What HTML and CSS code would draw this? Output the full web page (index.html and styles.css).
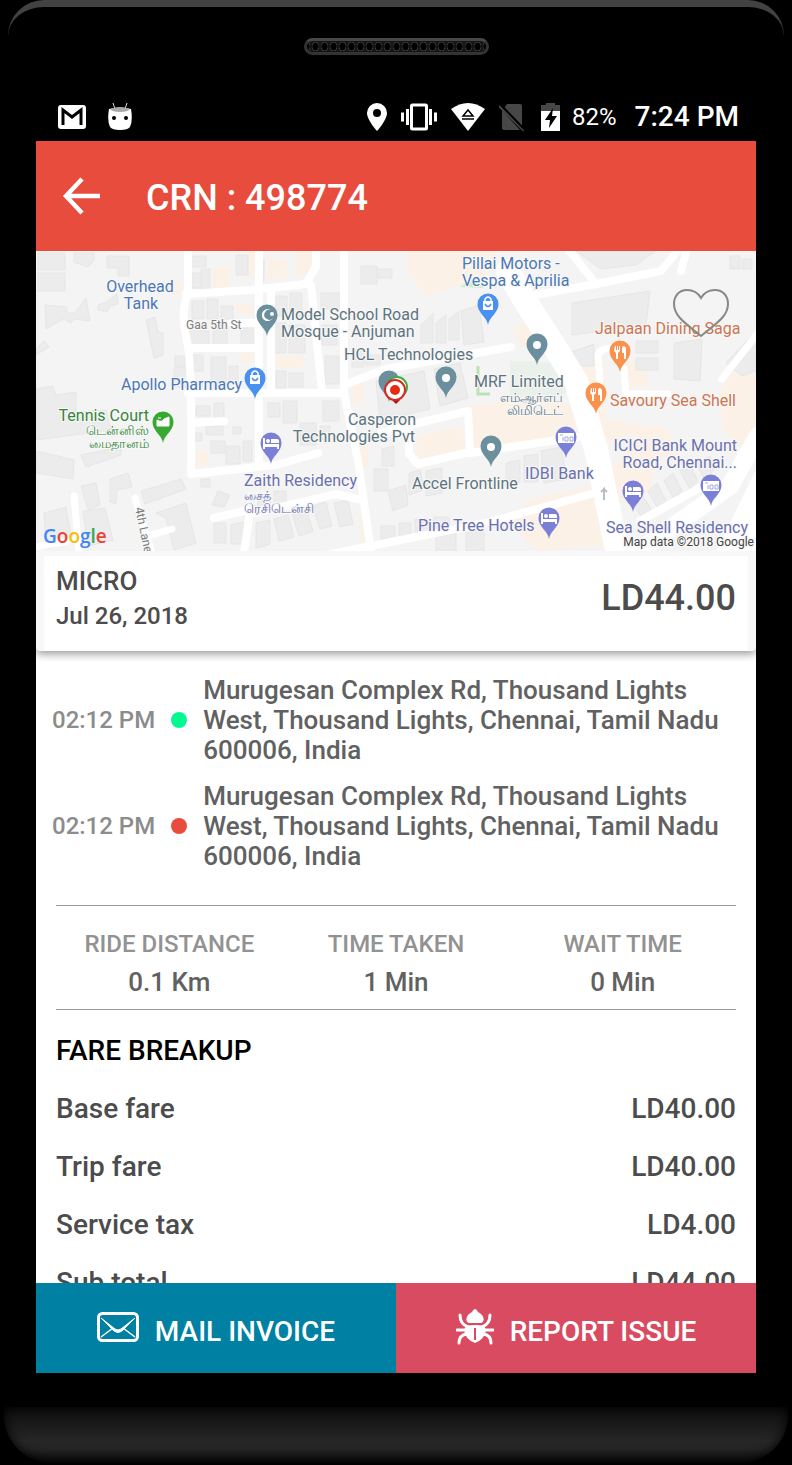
FILE: index.html
```
<!DOCTYPE html>
<html lang="en">
<head>
    <meta charset="UTF-8">
    <meta name="viewport" content="width=device-width, initial-scale=1.0">
    <title>CRN : 498774</title>
    <link rel="stylesheet" href="styles.css">
</head>
<body>
    <div class="phone">
        <div class="bezel-top">
            <div class="speaker"></div>
        </div>
        <div class="screen">
            <div class="status-bar">
                <div class="status-left">
                    <svg width="28" height="24" viewBox="0 0 28 24">
                        <rect width="28" height="24" rx="3" fill="#fff"/>
                        <path d="M5 20V5l9 7 9-7v15" fill="none" stroke="#000" stroke-width="3"/>
                    </svg>
                    <svg width="24" height="28" viewBox="0 0 24 28">
                        <path d="M5 0l2 6M19 0l-2 6" stroke="#ddd" stroke-width="1"/>
                        <path d="M1 6Q12 3 23 6Q25 17 22 24Q20 27 12 27T2 24Q-1 17 1 6z" fill="#fff"/>
                        <path d="M2 6Q12 2 22 6Q20 9 12 9T2 6z" fill="#aaa"/>
                        <circle cx="6" cy="15" r="2" fill="#000"/>
                        <circle cx="18" cy="15" r="2" fill="#000"/>
                    </svg>
                </div>
                <div class="status-right">
                    <svg width="20" height="28" viewBox="0 0 20 28">
                        <path d="M10 0A10 10 0 0 0 0 10C0 17 10 28 10 28S20 17 20 10A10 10 0 0 0 10 0z" fill="#fff"/>
                        <circle cx="10" cy="10" r="4" fill="#000"/>
                    </svg>
                    <svg width="36" height="28" viewBox="0 0 36 28">
                        <rect x="10.500" y="2" width="15" height="24" rx="1" fill="none" stroke="#fff" stroke-width="3"/>
                        <path d="M6.500 6v16M29.500 6v16M1.500 9.500v9M34.500 9.500v9" stroke="#fff" stroke-width="3"/>
                    </svg>
                    <svg width="34" height="28" viewBox="0 0 34 28">
                        <path d="M0 6Q17-6 34 6L17 28z" fill="#fff"/>
                        <path d="M12 13l5-6 5 6zM11 16h12" fill="none" stroke="#000" stroke-width="1.500"/>
                    </svg>
                    <svg width="26" height="28" viewBox="0 0 26 28">
                        <path d="M8 1h13q2 0 2 2v20L5 5zM3 7v18q0 2 2 2h16z" fill="#474747"/>
                        <path d="M0 3l25 25" stroke="#474747" stroke-width="2"/>
                        <path d="M2 2l24 25" stroke="#000" stroke-width="2"/>
                    </svg>
                    <svg class="battery-icon" width="19" height="28" viewBox="0 0 19 28">
                        <path d="M5 0h9v2h5v6H0V2h5z" fill="#474747"/>
                        <path d="M0 8h19v20H0z" fill="#fff"/>
                        <path d="M12 5L4 17h5l-1 8 8-12h-5z" fill="#000"/>
                    </svg>
                    <span class="battery">82%</span>
                    <span class="clock">7:24 PM</span>
                </div>
            </div>

            <header class="toolbar">
                <button class="back" aria-label="Back">
                    <svg width="38" height="38" viewBox="0 0 38 38">
                        <path d="M20 2L4 19l16 17M4 19h34" fill="none" stroke="#fff" stroke-width="4.500"/>
                    </svg>
                </button>
                <h1>CRN : 498774</h1>
            </header>

            <main class="content">
                <div class="map">
                    <svg class="map-canvas" viewBox="0 0 720 300">
                        <defs>
                            <path id="pin" d="M0 20C-1 12-10.500 8-10.500-1A10.500 10.500 0 0 1 10.500-1C10.500 8 1 12 0 20z"/>
                            <g id="bag">
                                <path d="M-5-4H5V5H-5z" fill="#fff"/>
                                <path d="M-3-4v-2q3-4 6 0v2" fill="none" stroke="#fff" stroke-width="1.500"/>
                                <path d="M-3-1q3 5 6 0" fill="none" stroke="#4a90f0" stroke-width="1.500"/>
                            </g>
                            <g id="bed" fill="#fff">
                                <path d="M-8-6h2v6H8v5H6V3H-6v2h-2z"/>
                                <path d="M0-5h6q2 0 2 2v2H0z"/>
                                <circle cx="-3" cy="-3" r="2"/>
                            </g>
                            <g id="fork" fill="#fff">
                                <path d="M-5-6h1v4h1v-4h1v4h1v-4h1v5l-2 2v6h-2V1l-2-2zM3-6q3 0 3 3v10H4V1H2v-5z"/>
                            </g>
                            <g id="note">
                                <path d="M-8-5H8V5H-8z" fill="#fff"/>
                                <path d="M-6-3h3M-3 3v-4M-1-1h3v4h-3zM4-1h3v4H4z" fill="none" stroke="#a5a8e2"/>
                            </g>
                        </defs>
                        <rect width="720" height="300" fill="#f4f4f4"/>

                        <!-- commercial areas and greenery -->
                        <g fill="#fbf1e6">
                            <path d="M370 0h88l-4 22-50 20-14 3-18-24z"/>
                            <path d="M177 16h17v22h-17zM232 8h19v20h-19zM138 28h7v17h-7zM200 53h17v10h-17zM240 105h27v12h-27zM205 102h12v10h-12z"/>
                            <path d="M380 185l46-10 2 24-46 9zM430 155l60-8 60 8-4 32-112 12zM538 118l30-12 2 62 38 6-30 18-30 2z"/>
                            <path d="M570 215l36-8 12 10-4 24-40 10zM684 140l16-25 20 10v85l-34-32zM490 250l66-16 14 60-70 6-22-24z"/>
                            <path d="M160 200h12v16h-12zM315 130h12v24h-12zM322 195h10v22h-10zM325 262h10v30h-10zM590 110h22v26h-22zM600 175h30l14 28-62 18zM490 68l15 19-18 10-12-16zM212 0h9v24h-9zM260 0h17v24h-17z"/>
                        </g>
                        <path d="M424 36l14-10 10 11z" fill="#cdeccb"/>
                        <path d="M474 110h22l24 3 16 20-10 13-28-2-24 4z" fill="#eaf0ea"/>
                        <path d="M442 115v28h12" fill="none" stroke="#b9e3b6" stroke-width="3"/>

                        <!-- buildings -->
                        <g fill="#ececec" stroke="#e6e6e6">
                            <path d="M2 2h27v17H2zM2 22h27v18H2zM38 2h20v7l-6 7-14-5zM71 5h22v20H82v-8H71z"/>
                            <path d="M9 54l22 2v6h8l11-15 4 23-16-2-3 4-8-4-17 10zM62 54l9-3 10-8 1 10-8 2-3 6-9-2zM110 69l9-3 3 15 5 1v22l-9 3z"/>
                            <path d="M0 98l8-8 5 6-13 8zM0 138l17-3 3 9 20-3v20l30-2 5 20-75 10zM1 200l37 9-1 19-37-6zM45 204l40-8v8l-35 12z"/>
                            <path d="M156 50h12v18h-12zM171 48h11v20h-11zM185 55h12v13h-12zM153 80h20v14h-20zM177 75h14v19h-14zM205 77h12v18h-12zM139 105h10v10h-10zM138 116h14v20h-14zM157 104h10v16h-10zM175 106h15v33h-15zM193 115h9v18h-9z"/>
                            <path d="M157 5h13v11h-13zM156 22h9v15h-9zM165 18h9v20h-9zM200 4h12v20h-12zM228 8v22h-1zM238 45h13v20h-13zM254 42h12v23h-12zM237 72h13v30h-13zM253 74h16v28h-16zM240 120h10v17h-10zM253 122h14v14h-14zM285 42h20v16h-20zM286 74h15v20h-15zM289 105h14v28h-14z"/>
                            <path d="M160 155h14v10h-14zM178 152h10v16h-10zM157 182h9v8h-9zM170 175h17v9h-17zM175 190h14v12h-14zM190 195h14v18h-14zM207 190h9v20h-9zM197 176h8v7h-8zM232 152h12v14h-12zM247 150h14v22h-14zM264 172h16v22h-16zM287 150h16v20h-16zM284 175h10v14h-10z"/>
                            <path d="M325 15h16v18h-16zM342 18h14v9h-14zM316 100h12v16h-12zM330 104h14v10h-14zM340 130l48-10 6 38-50 12zM398 118l26-6 8 35-28 8zM385 74l12-12v30h-12zM400 72l10-8v28h-10zM413 68l10-8v29h-10zM425 60l18-6 5 37-20 3z"/>
                            <path d="M536 52l78-12-4 34-74 10zM530 103l28-10v22h-24zM600 90h22v12h-22zM600 107h22v12h-22zM638 92l28-4-2 42-26-2zM690 112l30-32v40l-14 5zM694 5h10v13h-10zM706 8h10v10h-10zM540 0h80l-20 14-35 4z"/>
                            <path d="M45 235l15-3 4 22-12 5zM74 228l18-6 4 14-15 3-1 14-6-2zM105 240l40-12 5 10-41 15zM47 260l22-3 8 32-25 6zM120 262l30-10 10 40-22 7-8-32zM8 262l22-6 6 34-26 8zM165 228h9v8h-9zM182 240l12 4-6 12-12-2zM178 272h12v20h-12zM195 274l12-3v22h-12z"/>
                            <path d="M222 244h12v15h-12zM238 240h12v14h-12zM220 272l14-3v24l-14 4zM238 268l14-4 6 22-15 4zM256 262l14-4 7 22-14 5zM276 255l14-4 6 24-12 3zM298 252l14-3 5 24-13 3zM338 218h14v22h-14zM346 198l12-3v20h-12zM352 240l18-6 2 20-15 6zM373 222l12-3 2 20-14 5zM390 220l16-3v25l-16 3z"/>
                            <path d="M345 275h14v18h-14zM363 272h12v16h-12zM379 268h14v15h-14zM398 266h15v12h-15zM470 212l14-3v22l-14 4zM488 205l14-2v28h-14zM505 200l20-4 6 32-23 4zM596 252l9-10 10 16-8 10zM612 240l9-8 9 18-8 8zM628 230l9-8 9 18-8 8zM644 220l9-8 9 18-8 8zM660 212l14-7 4 14-10 9zM400 286l20-4v18h-20zM430 282l18-4v22h-18z"/>
                        </g>

                        <!-- streets -->
                        <g fill="none" stroke="#fff" stroke-width="8" stroke-linejoin="round" stroke-linecap="round">
                            <path d="M152-2V42Q144 60 151 90Q156 105 155 223L240 214L282 202"/>
                            <path d="M150 43L215 39L270 33L280 15V-2M152 97H222M152 142H305M223-2V212M156 172L188 170"/>
                            <path d="M235 40V140M275 34L286 140M308-2V142L322 210L335 300"/>
                            <path d="M196 72H222M308 134L350 118L475 96M370 175L432 160L434 201L382 213L373 203V175L345 182"/>
                            <path d="M434 202L542 186M218 262L300 243L326 249M214 260L208 302M178 267L216 258M290 304L450 272L566 240"/>
                            <path d="M38 245L43 302M99 247L116 302M115 284L136 278M0 296L42 288" stroke-width="7"/>
                            <path d="M482 47L560 33L625 20L643-2M560 33L532-2M645 20L651-2"/>
                            <path d="M564 130L562 105Q564 96 578 97H586M588 118L590 143H632M686 128L722 82" stroke-width="7"/>
                            <path d="M472 20L488 48L520 98L540 130L560 198L582 304" stroke-width="24"/>
                            <path d="M600 302L694 235L722 185" stroke-width="18"/>
                            <path d="M604 270L640 250L680 228"/>
                        </g>
                        <path d="M679 302L722 215V302z" fill="#fff"/>
                        <path d="M568 249v-11l-3 3m3-3l3 3" fill="none" stroke="#b9bec5" stroke-width="2"/>

                        <!-- pins -->
                        <g fill="#6b8f9d">
                            <use href="#pin" x="231" y="65"/>
                            <use href="#pin" x="501" y="94"/>
                            <use href="#pin" x="410" y="127"/>
                            <use href="#pin" x="455" y="196"/>
                            <use href="#pin" x="353" y="131"/>
                        </g>
                        <path d="M235 59a6 6 0 1 0 2 8 5 5 0 1 1-2-8z" fill="#fff"/>
                        <circle cx="236" cy="63" r="2" fill="#fff"/>
                        <g fill="#fff">
                            <circle cx="501" cy="94" r="4"/>
                            <circle cx="410" cy="127" r="4"/>
                            <circle cx="455" cy="196" r="4"/>
                        </g>
                        <g fill="#4a90f0">
                            <use href="#pin" x="219" y="128"/>
                            <use href="#pin" x="452" y="54"/>
                        </g>
                        <use href="#bag" x="219" y="128"/>
                        <use href="#bag" x="452" y="54"/>
                        <use href="#pin" x="127" y="172" fill="#38a832"/>
                        <path d="M121 169q5 3 7-1l5-2v9h-12zM122 167h3" fill="#fff" stroke="#fff"/>
                        <g fill="#7b7fd6">
                            <use href="#pin" x="235" y="193"/>
                            <use href="#pin" x="513" y="268"/>
                            <use href="#pin" x="597" y="241"/>
                            <use href="#pin" x="530" y="187"/>
                            <use href="#pin" x="675" y="235"/>
                        </g>
                        <use href="#bed" x="235" y="193"/>
                        <use href="#bed" x="513" y="268"/>
                        <use href="#bed" x="597" y="241"/>
                        <use href="#note" x="530" y="187"/>
                        <use href="#note" x="675" y="235"/>
                        <g fill="#fa914d">
                            <use href="#pin" x="584" y="101"/>
                            <use href="#pin" x="560" y="143"/>
                        </g>
                        <use href="#fork" x="584" y="101"/>
                        <use href="#fork" x="560" y="143"/>

                        <!-- ride marker -->
                        <circle cx="361" cy="136" r="10" fill="#fff" stroke="#3fae49" stroke-width="2"/>
                        <path d="M356 149l4 4 4-4z" fill="#a11"/>
                        <circle cx="359" cy="139" r="10" fill="#fff" stroke="#d9281e" stroke-width="2"/>
                        <circle cx="359" cy="139" r="5" fill="#e52b12"/>

                        <!-- labels -->
                        <g class="label blue">
                            <text x="104" y="41" text-anchor="middle">Overhead</text>
                            <text x="105" y="58" text-anchor="middle">Tank</text>
                            <text x="85" y="139">Apollo Pharmacy</text>
                            <text x="426" y="18">Pillai Motors -</text>
                            <text x="426" y="35">Vespa &amp; Aprilia</text>
                        </g>
                        <g class="label slate">
                            <text x="245" y="69">Model School Road</text>
                            <text x="245" y="86">Mosque - Anjuman</text>
                            <text x="308" y="109">HCL Technologies</text>
                            <text x="346" y="174" text-anchor="middle">Casperon</text>
                            <text x="379" y="191" text-anchor="end">Technologies Pvt</text>
                            <text x="438" y="136">MRF Limited</text>
                            <text class="tamil" x="527" y="151" text-anchor="end">எம்ஆர்எப்</text>
                            <text class="tamil" x="527" y="164" text-anchor="end">லிமிடெட்</text>
                            <text x="376" y="238">Accel Frontline</text>
                        </g>
                        <g class="label green">
                            <text x="113" y="170" text-anchor="end">Tennis Court</text>
                            <text class="tamil" x="113" y="184" text-anchor="end">டென்னிஸ்</text>
                            <text class="tamil" x="113" y="197" text-anchor="end">மைதானம்</text>
                        </g>
                        <g class="label violet">
                            <text x="208" y="235">Zaith Residency</text>
                            <text class="tamil" x="208" y="249">சைத்</text>
                            <text class="tamil" x="208" y="262">ரெசிடென்சி</text>
                            <text x="382" y="280">Pine Tree Hotels</text>
                            <text x="489" y="228">IDBI Bank</text>
                            <text x="701" y="200" text-anchor="end">ICICI Bank Mount</text>
                            <text x="701" y="217" text-anchor="end">Road, Chennai...</text>
                            <text x="570" y="282">Sea Shell Residency</text>
                        </g>
                        <g class="label orange">
                            <text x="559" y="83">Jalpaan Dining Saga</text>
                            <text x="574" y="155">Savoury Sea Shell</text>
                        </g>
                        <g class="label street">
                            <text x="150" y="78">Gaa 5th St</text>
                            <text transform="translate(99 257) rotate(78)">4th Lane</text>
                        </g>
                        <text class="credit" x="718" y="295" text-anchor="end">Map data ©2018 Google</text>
                        <text class="google" x="7" y="292"><tspan fill="#4285f4">G</tspan><tspan fill="#ea4335">o</tspan><tspan fill="#fbbc05">o</tspan><tspan fill="#4285f4">g</tspan><tspan fill="#34a853">l</tspan><tspan fill="#ea4335">e</tspan></text>
                    </svg>
                    <button class="favourite" aria-label="Favourite">
                        <svg width="58" height="50" viewBox="0 0 58 50">
                            <path d="M29 10C25 3 19 2 15 2C7 2 2 8 2 16C2 28 13 35 29 48C45 35 56 28 56 16C56 8 51 2 43 2C39 2 33 3 29 10z" fill="none" stroke="#888" stroke-width="2"/>
                        </svg>
                    </button>
                </div>

                <section class="summary">
                    <div>
                        <h2>MICRO</h2>
                        <p>Jul 26, 2018</p>
                    </div>
                    <strong>LD44.00</strong>
                </section>

                <section class="route">
                    <div class="stop">
                        <time>02:12 PM</time>
                        <span class="dot pickup"></span>
                        <p>Murugesan Complex Rd, Thousand Lights West, Thousand Lights, Chennai, Tamil Nadu 600006, India</p>
                    </div>
                    <div class="stop">
                        <time>02:12 PM</time>
                        <span class="dot drop"></span>
                        <p>Murugesan Complex Rd, Thousand Lights West, Thousand Lights, Chennai, Tamil Nadu 600006, India</p>
                    </div>
                </section>

                <dl class="stats">
                    <div>
                        <dt>RIDE DISTANCE</dt>
                        <dd>0.1 Km</dd>
                    </div>
                    <div>
                        <dt>TIME TAKEN</dt>
                        <dd>1 Min</dd>
                    </div>
                    <div>
                        <dt>WAIT TIME</dt>
                        <dd>0 Min</dd>
                    </div>
                </dl>

                <table class="fare">
                    <caption>FARE BREAKUP</caption>
                    <tbody>
                        <tr><th scope="row">Base fare</th><td>LD40.00</td></tr>
                        <tr><th scope="row">Trip fare</th><td>LD40.00</td></tr>
                        <tr><th scope="row">Service tax</th><td>LD4.00</td></tr>
                        <tr><th scope="row">Sub total</th><td>LD44.00</td></tr>
                    </tbody>
                </table>
            </main>

            <div class="actions">
                <button class="mail">
                    <svg width="42" height="30" viewBox="0 0 42 30">
                        <rect x="1.500" y="1.500" width="39" height="27" rx="4" fill="none" stroke="#fff" stroke-width="3"/>
                        <path d="M4 6L18 17q3 2 6 0L38 6 25 19q-4 3-8 0z" fill="#fff" stroke="#fff"/>
                        <path d="M4 25l12-9M38 25l-12-9" stroke="#fff" stroke-width="1.500"/>
                    </svg>
                    <span>MAIL INVOICE</span>
                </button>
                <button class="report">
                    <svg width="38" height="36" viewBox="0 0 38 36">
                        <path d="M13 14q-5-2-1-8 2-2 4-3 3-6 6 0 2 1 4 3 4 6-1 8z" fill="#fff"/>
                        <path d="M10 17q9-2 18 0l2 4q-1 9-11 13Q9 30 8 21z" fill="#fff"/>
                        <path d="M19 19v12" stroke="#d84b60" stroke-width="2"/>
                        <path d="M4 6q0 9 8 12M34 6q0 9-8 12M1 21h9M37 21h-9M3 34q0-8 8-9M35 34q0-8-8-9" fill="none" stroke="#fff" stroke-width="3" stroke-linecap="round"/>
                    </svg>
                    <span>REPORT ISSUE</span>
                </button>
            </div>
        </div>
        <div class="bezel-bottom"></div>
    </div>
</body>
</html>
```
FILE: styles.css
```
* {
    box-sizing: border-box;
}
body {
    margin: 0;
    background-color: #000;
    font-family: Roboto, "Noto Sans", sans-serif;
    font-weight: 500;
    color: #4c4c4c;
}
h1, h2, p, dl, dd {
    margin: 0;
    font-weight: 500;
}
button {
    border: 0;
    padding: 0;
    background: none;
    color: #fff;
    font: inherit;
    cursor: pointer;
}
svg {
    display: block;
    flex: none;
}

/* phone frame */
.phone {
    display: flex;
    flex-direction: column;
    height: 100vh;
    padding-bottom: 2px;
}
.bezel-top {
    height: 94px;
    flex: none;
    margin: 0 8px;
    padding-top: 31px;
    border-top: 7px solid #424242;
    border-radius: 36px 36px 0 0;
}
.speaker {
    width: 185px;
    height: 17px;
    margin: 0 auto;
    border: 3px solid #333;
    border-top-color: #484848;
    border-radius: 9px;
    background: #151515 radial-gradient(ellipse 4px 5px at 50% 50%, #000 70%, #4a4a4a 90%, #151515 100%) 4px 0 / 9px 11px repeat-x;
}
.screen {
    display: flex;
    flex-direction: column;
    flex: 1;
    min-height: 0;
    margin: 0 36px 34px;
    background-color: #fff;
}
.bezel-bottom {
    height: 56px;
    flex: none;
    margin: 0 4px;
    border-radius: 0 0 48px 48px;
    background: linear-gradient(#0d0d0d, #262626 60%, #242424 75%, #0a0a0a);
    box-shadow: inset 0 0 12px #000;
}

/* status bar */
.status-bar {
    display: flex;
    justify-content: space-between;
    align-items: center;
    height: 47px;
    flex: none;
    padding: 0 17px 2px 22px;
    background-color: #000;
    color: #fff;
}
.status-left, .status-right {
    display: flex;
    align-items: center;
    gap: 22px;
}
.status-right {
    gap: 14px;
}
.battery-icon {
    margin: 0 -2px 0 2px;
}
.battery {
    font-size: 24px;
    font-weight: 400;
}
.clock {
    margin-left: 4px;
    font-size: 28px;
}

.toolbar {
    display: flex;
    align-items: center;
    gap: 46px;
    height: 110px;
    flex: none;
    padding: 0 26px;
    background-color: #e84c3d;
    color: #fff;
}
.toolbar h1 {
    padding-top: 4px;
    font-size: 36px;
}
.content {
    flex: 1;
    min-height: 0;
    overflow: hidden;
}

/* map */
.map {
    position: relative;
}
.map-canvas {
    width: 100%;
    height: auto;
}
.label {
    font-size: 16px;
    font-weight: 400;
    stroke: #f8f8f8;
    stroke-width: 2px;
    paint-order: stroke;
}
.tamil {
    font-size: 13px;
}
.blue {
    fill: #4b77b5;
}
.slate {
    fill: #5d747e;
}
.green {
    fill: #35853a;
}
.violet {
    fill: #6a70ad;
}
.orange {
    fill: #cc7550;
}
.street {
    fill: #7c7c7c;
    font-size: 12px;
}
.credit {
    fill: #444;
    font-size: 12px;
    font-weight: 400;
    stroke: #f8f8f8;
    stroke-width: 3px;
    paint-order: stroke;
}
.google {
    font-family: "Open Sans", sans-serif;
    font-size: 19px;
    font-weight: 600;
}
.favourite {
    position: absolute;
    top: 37px;
    right: 26px;
}

.summary {
    display: flex;
    justify-content: space-between;
    align-items: center;
    height: 100px;
    padding: 0 12px 12px;
    border: 8px solid #f8f8f8;
    border-width: 5px 8px 0;
    border-radius: 4px;
    background-color: #fff;
    box-shadow: 0 3px 8px rgba(0, 0, 0, 0.4);
}
.summary h2 {
    font-size: 26px;
    line-height: 36px;
}
.summary p {
    font-size: 24px;
    line-height: 34px;
}
.summary strong {
    font-size: 36px;
    font-weight: 500;
}

/* pickup and drop */
.route {
    display: flex;
    flex-direction: column;
    gap: 16px;
    padding: 24px 16px 34px;
}
.stop {
    display: flex;
    align-items: center;
    gap: 16px;
    font-size: 26px;
    line-height: 30px;
    color: #616161;
}
.stop time {
    flex: none;
    font-size: 24px;
    color: #8c8c8c;
}
.dot {
    flex: none;
    width: 16px;
    height: 16px;
    border-radius: 50%;
}
.pickup {
    background-color: #00fa92;
}
.drop {
    background-color: #e84c3d;
}

.stats {
    display: grid;
    grid-template-columns: repeat(3, 1fr);
    margin: 0 20px;
    padding: 19px 0 8px;
    border-top: 1px solid #999;
    border-bottom: 1px solid #999;
    text-align: center;
}
.stats dt {
    font-size: 24px;
    line-height: 38px;
    color: #929292;
}
.stats dd {
    font-size: 26px;
    line-height: 38px;
    color: #616161;
}

/* fare table */
.fare {
    width: 100%;
    padding: 0 20px;
    border-spacing: 0;
    font-size: 28px;
}
.fare caption {
    padding: 12px 20px 0;
    color: #000;
    line-height: 58px;
    text-align: left;
}
.fare th, .fare td {
    padding: 0;
    font-weight: 500;
    line-height: 58px;
    text-align: left;
}
.fare td {
    text-align: right;
}

.actions {
    display: grid;
    grid-template-columns: 1fr 1fr;
    height: 90px;
    flex: none;
}
.actions button {
    display: flex;
    justify-content: center;
    align-items: center;
    gap: 16px;
    font-size: 28px;
}
.actions span {
    padding-top: 6px;
}
.actions svg {
    margin-bottom: 2px;
}
.mail {
    background-color: #0081a3;
}
.report {
    background-color: #d84b60;
}
```
